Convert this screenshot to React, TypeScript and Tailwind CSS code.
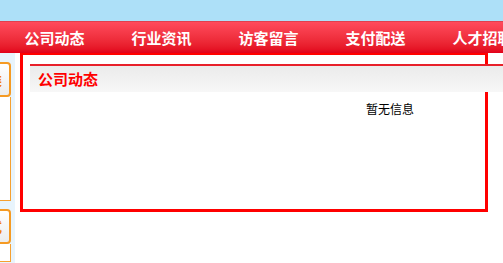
import React from "react";

const NAV = ["公司动态", "行业资讯", "访客留言", "支付配送", "人才招聘"];

const font = { fontFamily: '"Noto Sans CJK SC", "Noto Sans", sans-serif' };

function SideTab({ label }: { label: string }) {
  return (
    <div className="ml-[-109px] flex h-[35px] w-[120px] items-center justify-end rounded-[4px] border-2 border-[#f59a23] bg-gradient-to-b from-white to-[#ececec] pr-[7px] text-[14px] font-bold text-[#f07c00]">
      {label}
    </div>
  );
}

export default function App() {
  return (
    <div
      className="relative h-[263px] w-[503px] overflow-hidden bg-white"
      style={font}
    >
      <div className="h-[21px] bg-[#ade0f8]" />
      <nav className="flex h-[32px] items-center border-t border-[#e0404e] bg-gradient-to-b from-[#ff4a5c] to-[#e2001a] pl-[1px]">
        {NAV.map((item) => (
          <div
            key={item}
            className="w-[107px] shrink-0 whitespace-nowrap text-center text-[15px] font-bold leading-none text-white"
          >
            {item}
          </div>
        ))}
      </nav>
      <div className="flex">
        {/* left column */}
        <div className="h-[210px] w-[15px] shrink-0 overflow-hidden bg-[#e8f4fc]">
          <div className="w-[11px] pt-[9px]">
            <SideTab label="产品分类" />
            <div className="ml-[-109px] h-[104px] w-[120px] border border-t-0 border-[#f5a030] bg-white" />
            <div className="h-[8px]" />
            <SideTab label="联系方式" />
            <div className="ml-[-109px] h-[18px] w-[120px] border border-t-0 border-[#f5a030] bg-white" />
          </div>
        </div>
        <div className="w-[5px] shrink-0" />
        {/* main frame */}
        <div className="h-[159px] w-[468px] shrink-0 border-[3px] border-t-2 border-[#ff0000] pl-[7px] pt-[9px]">
          <div className="w-[720px]">
            <div className="flex h-[28px] items-center border-t-2 border-[#e8202a] bg-gradient-to-b from-[#ebebeb] to-[#f7f7f7] pl-[8px] text-[15px] font-bold text-[#ff0000]">
              公司动态
            </div>
            <div className="mt-[10px] text-center text-[12px] leading-[14px] text-black">
              暂无信息
            </div>
          </div>
        </div>
      </div>
    </div>
  );
}
